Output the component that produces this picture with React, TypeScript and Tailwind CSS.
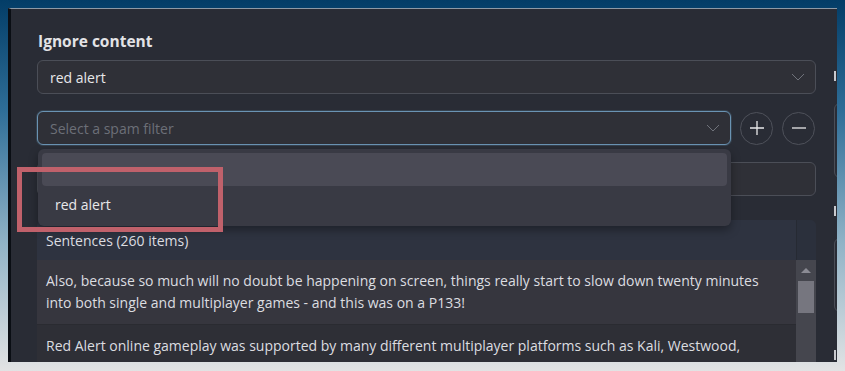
import React from "react";

const Chevron = ({ className = "" }: { className?: string }) => (
  <svg width="14" height="8" viewBox="0 0 14 8" className={className} fill="none">
    <path d="M1 1l6 6 6-6" stroke="#6f727a" strokeWidth="1" />
  </svg>
);

const rows = [
  "Also, because so much will no doubt be happening on screen, things really start to slow down twenty minutes into both single and multiplayer games - and this was on a P133!",
  "Red Alert online gameplay was supported by many different multiplayer platforms such as Kali, Westwood, GameSpy, TEN, Mplayer and Heat.",
];

const App = () => {
  return (
    <div
      className="w-[845px] h-[371px] overflow-hidden pt-2 pl-2 bg-[linear-gradient(to_bottom,#033d67_0%,#2f6e98_30%,#8fb2c6_65%,#e2e3e4_100%)]"
      style={{ fontFamily: '"Open Sans", "Noto Sans", sans-serif' }}
    >
      <div className="relative w-[829px] h-[354px] overflow-hidden bg-[#292c35] border-t border-t-[#8d9aa6] border-l-[3px] border-l-[#0a0e14] flex">
        {/* main column */}
        <div className="w-[805px] shrink-0 pl-[26px] pt-[22px]">
          <h2 className="text-[15.5px] font-bold text-[#e3e3e6] leading-5 pl-px">Ignore content</h2>

          <div className="mt-[9px] h-[34px] rounded-md border border-[#4b4e57] bg-[#2f3037] flex items-center justify-between pl-3 pr-[10px]">
            <span className="text-[14px] text-[#e8e8ea]">red alert</span>
            <Chevron />
          </div>

          <div className="mt-[17px] flex items-center gap-[9px]">
            <div className="w-[694px] h-[34px] rounded-md border border-[#6a93b3] shadow-[0_0_0_1px_rgba(90,130,160,0.25)] bg-[#2f3037] flex items-center justify-between pl-3 pr-[10px]">
              <span className="text-[14px] text-[#6c6f77]">Select a spam filter</span>
              <Chevron />
            </div>
            <button className="w-[33px] h-[33px] rounded-full border border-[#4e515a] flex items-center justify-center">
              <svg width="16" height="16" viewBox="0 0 16 16">
                <path d="M8 1v14M1 8h14" stroke="#e8e8ea" strokeWidth="1.3" />
              </svg>
            </button>
            <button className="w-[33px] h-[33px] rounded-full border border-[#4e515a] flex items-center justify-center">
              <svg width="16" height="16" viewBox="0 0 16 16">
                <path d="M1 8h14" stroke="#e8e8ea" strokeWidth="1.3" />
              </svg>
            </button>
          </div>

          <div className="mt-[17px] h-[34px] rounded-md border border-[#4b4e57] bg-[#2f3037]" />

          <div className="mt-[24px] rounded-t-md overflow-hidden">
            <div className="flex h-[40px] bg-[#2e3340]">
              <div className="flex-1 flex items-center pl-[9px] text-[14px] text-[#dcdde0]">Sentences (260 items)</div>
              <div className="w-5 border-l border-[#262a33] bg-[#2b303c]" />
            </div>
            <div className="flex">
              <div className="flex-1 min-w-0">
                {rows.map((r, i) => (
                  <div
                    key={i}
                    className={`pl-[9px] pr-[20px] py-[10px] text-[14px] leading-[22px] text-[#dcdde0] ${
                      i === 0 ? "bg-[#36363e] border-b border-[#2a2b31]" : "bg-[#2e2f36]"
                    }`}
                  >
                    <p className="max-w-[728px]">{r}</p>
                  </div>
                ))}
              </div>
              <div className="w-5 shrink-0 bg-[#45464e] flex flex-col items-center pt-[7px]">
                <svg width="10" height="6" viewBox="0 0 10 6">
                  <path d="M0 6l5-5 5 5z" fill="#8b8b94" />
                </svg>
                <div className="mt-[8px] w-4 h-[32px] bg-[#76767f]" />
              </div>
            </div>
          </div>
        </div>

        {/* cut-off right column */}
        <div className="ml-[18px] shrink-0 w-6 flex flex-col">
          <div className="mt-[62px] w-[2px] h-[10px] bg-[#c9cace]" />
          <div className="mt-[22px] h-[75px] rounded-md border border-[#4b4e57]" />
          <div className="mt-[28px] w-[2px] h-[10px] bg-[#c9cace]" />
          <div className="mt-[22px] h-[74px] rounded-md border border-[#4b4e57]" />
          <div className="mt-[38px] w-[2px] h-[10px] bg-[#c9cace]" />
        </div>

        {/* open dropdown */}
        <div className="absolute left-[27px] top-[140px] w-[693px] h-[77px] rounded-md bg-[#393a44] shadow-[0_4px_10px_rgba(0,0,0,0.35)] p-1">
          <div className="h-[33px] rounded bg-[#4a4a55]" />
          <div className="h-[36px] flex items-center pl-[13px] text-[14px] text-[#e8e8ea]">red alert</div>
        </div>

        {/* annotation */}
        <div className="absolute left-[6px] top-[158px] w-[206px] h-[65px] border-[5px] border-[#c0616b]" />
      </div>
    </div>
  );
};

export default App;
